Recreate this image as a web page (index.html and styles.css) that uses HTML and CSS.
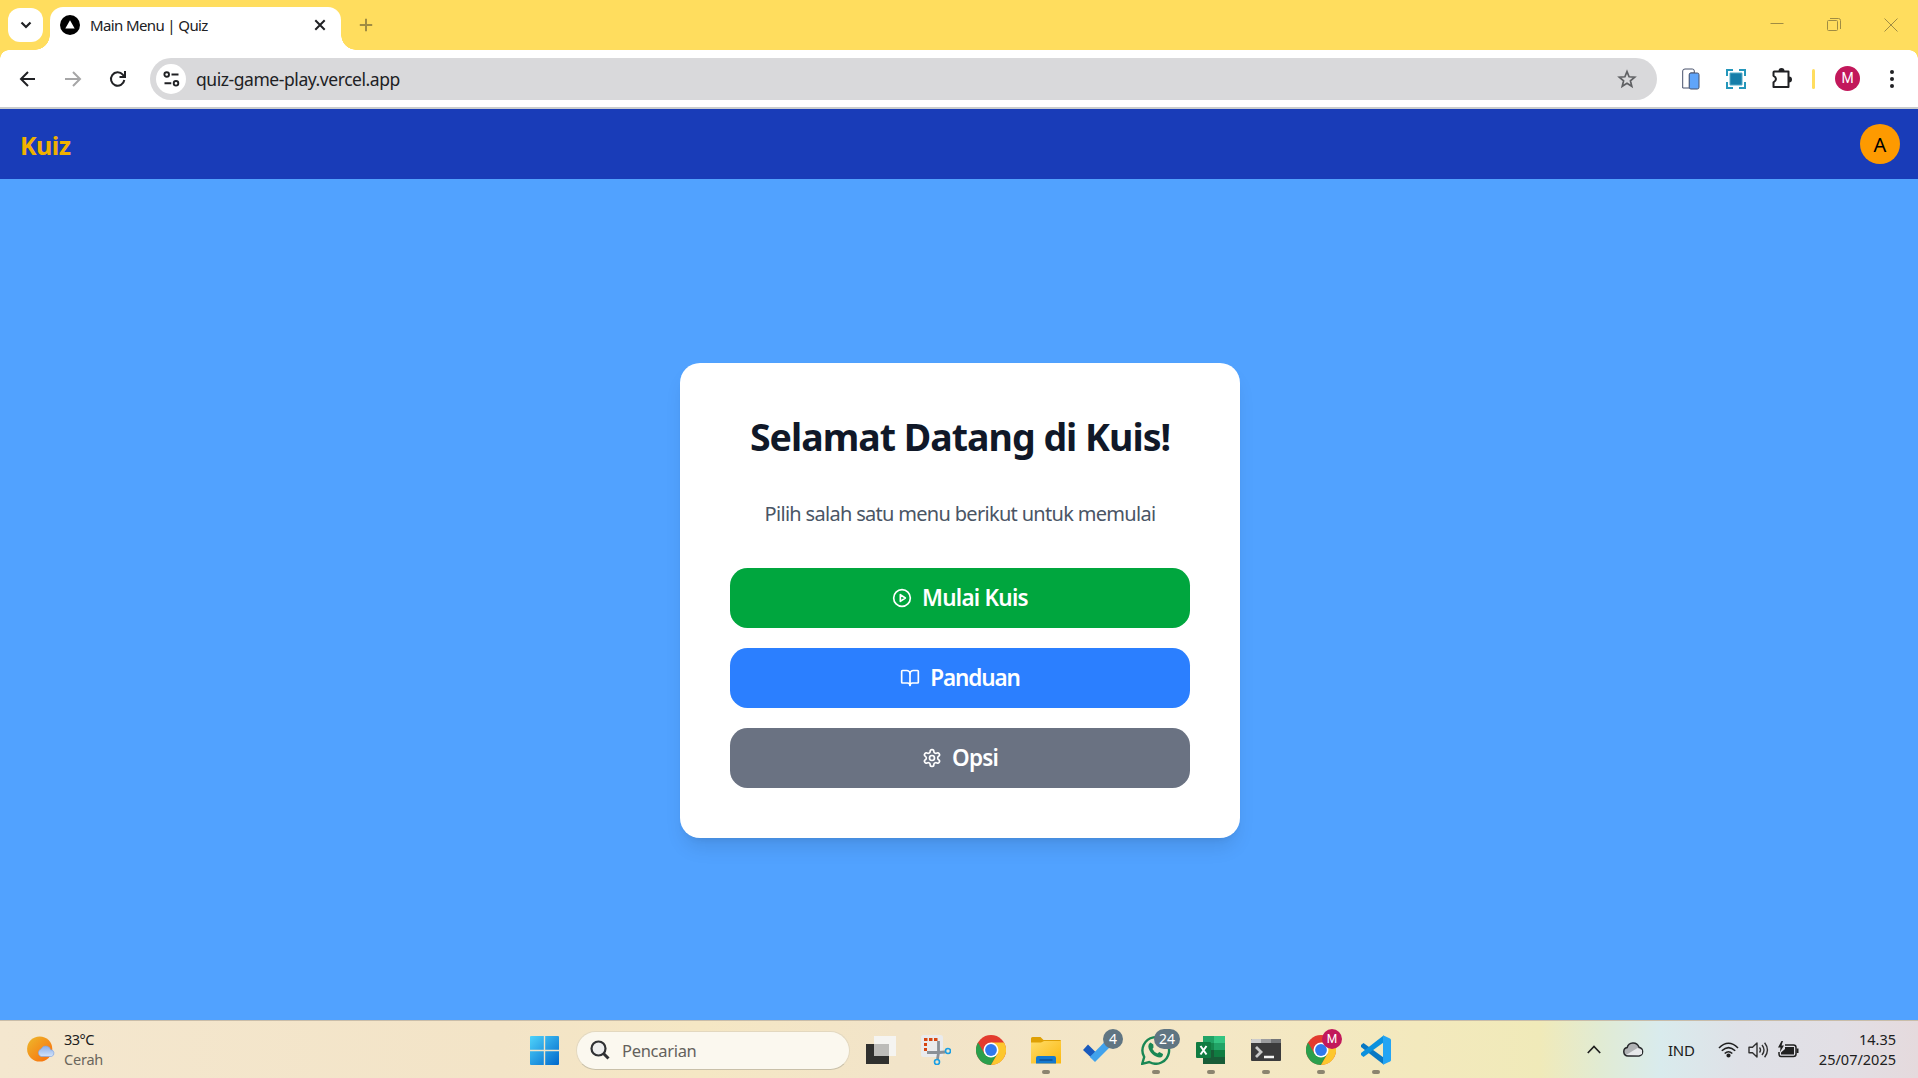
FILE: index.html
```html
<!DOCTYPE html>
<html lang="id">
<head>
<meta charset="utf-8">
<title>Main Menu | Quiz</title>
<link rel="stylesheet" href="styles.css">
</head>
<body>
<div class="screen">
  <div class="tabstrip">
    <div class="tab-search"><svg width="12" height="8" viewBox="0 0 12 8"><path d="M1.500 1.500 6 6l4.500-4.500" fill="none" stroke="#202124" stroke-width="2.200"/></svg></div>
    <div class="tab">
      <svg class="favicon" width="20" height="20" viewBox="0 0 20 20"><circle cx="10" cy="10" r="10"/><path d="M10 5.200 14.700 13.600H5.300z" fill="#fff"/></svg>
      <span class="tab-title">Main Menu | Quiz</span>
      <svg width="12" height="12" viewBox="0 0 12 12"><path d="M1.300 1.300 10.700 10.700M10.700 1.300 1.300 10.700" stroke="#202124" stroke-width="2"/></svg>
    </div>
    <svg class="new-tab" width="14" height="14" viewBox="0 0 14 14"><path d="M7 .8V13.200M.8 7H13.200" stroke="#a08c43" stroke-width="2"/></svg>
    <div class="window-controls">
      <svg width="14" height="14" viewBox="0 0 14 14"><path d="M.5 5.500H13.500" stroke="#a08c43"/></svg>
      <svg width="14" height="14" viewBox="0 0 14 14" fill="none" stroke="#a08c43"><rect x=".5" y="2.500" width="10" height="10" rx="1"/><path d="M3 .5h8.500a2 2 0 0 1 2 2V11"/></svg>
      <svg width="14" height="14" viewBox="0 0 14 14"><path d="M.5.5 13.500 13.500M13.500.5.5 13.500" stroke="#a08c43"/></svg>
    </div>
  </div>

  <div class="toolbar">
    <div class="nav">
      <svg width="18" height="18" viewBox="0 0 18 18" fill="none" stroke="#202124" stroke-width="2"><path d="M16 9H2M9 2 2 9l7 7"/></svg>
      <svg width="18" height="18" viewBox="0 0 18 18" fill="none" stroke="#a6a6a7" stroke-width="2"><path d="M1 9H15.500M9 2l7 7-7 7"/></svg>
      <svg width="18" height="18" viewBox="0 0 18 18" fill="none" stroke="#202124" stroke-width="2"><path d="M15.300 10A6.700 6.700 0 1 1 13.800 4.700L16 6.700M16 1V7H10.500"/></svg>
    </div>
    <div class="omnibox">
      <span class="site-info"><svg width="17" height="16" viewBox="0 0 17 16" fill="none" stroke="#202124" stroke-width="1.900"><circle cx="3.700" cy="3.500" r="2.300"/><path d="M8.500 3.500H15.500M1.500 12.300H8.300"/><circle cx="13" cy="12.300" r="2.300"/></svg></span>
      <span class="url">quiz-game-play.vercel.app</span>
      <svg width="20" height="20" viewBox="0 0 20 20" fill="none" stroke="#606164" stroke-width="1.700"><path d="M10 2.600 12.100 7.800 17.700 8.200 13.400 11.800 14.800 17.300 10 14.300 5.200 17.300 6.600 11.800 2.300 8.200 7.900 7.800z"/></svg>
    </div>
    <div class="extensions">
      <svg width="18" height="22" viewBox="0 0 18 22" stroke="#47516b"><path d="M.7 20V3Q.7 1 3 1H10.300Q12.300 1 12.300 3V5H9Q7.500 5 7.500 7V20z" fill="#fff"/><rect x="7.200" y="5" width="9.800" height="16" rx="1.700" fill="#60a5fa"/></svg>
      <svg width="20" height="20" viewBox="0 0 20 20" fill="none" stroke="#2597bb" stroke-width="2"><path d="M1 7V1H7M13 1H19V7M19 13V19H13M7 19H1V13"/><path d="M4 4H16V16H4z" fill="#167ea9" stroke="#50aac6" stroke-width="1"/></svg>
      <svg width="21" height="21" viewBox="0 0 21 21"><path d="M3.300 3.500H17.500V19H2.500V14.300C5.800 12.500 5.800 9.300 2.500 7.800V4.500Q2.500 3.500 3.300 3.500z" fill="none" stroke="#202124" stroke-width="2" stroke-linejoin="round"/><path d="M7.500 3a3 3 0 0 1 6 0zM18 8.500a3 3 0 0 1 0 6z" fill="#202124"/></svg>
      <i class="divider"></i>
      <span class="profile">M</span>
      <svg width="4" height="18" viewBox="0 0 4 18" fill="#202124"><circle cx="2" cy="2" r="2"/><circle cx="2" cy="9" r="2"/><circle cx="2" cy="16" r="2"/></svg>
    </div>
  </div>

  <header class="app-header">
    <span class="brand">Kuiz</span>
    <span class="avatar">A</span>
  </header>

  <main class="stage">
    <section class="card">
      <h1>Selamat Datang di Kuis!</h1>
      <p>Pilih salah satu menu berikut untuk memulai</p>
      <button class="btn start"><svg class="lucide" viewBox="0 0 24 24"><circle cx="12" cy="12" r="10"/><path d="M10 8 16 12 10 16z"/></svg><span>Mulai Kuis</span></button>
      <button class="btn guide"><svg class="lucide" viewBox="0 0 24 24"><path d="M12 7v14"/><path d="M3 18a1 1 0 0 1-1-1V4a1 1 0 0 1 1-1h5a4 4 0 0 1 4 4 4 4 0 0 1 4-4h5a1 1 0 0 1 1 1v13a1 1 0 0 1-1 1h-6a3 3 0 0 0-3 3 3 3 0 0 0-3-3z"/></svg><span>Panduan</span></button>
      <button class="btn options"><svg class="lucide" viewBox="0 0 24 24"><path d="M12.220 2h-.44a2 2 0 0 0-2 2v.18a2 2 0 0 1-1 1.730l-.43.25a2 2 0 0 1-2 0l-.15-.08a2 2 0 0 0-2.730.73l-.22.38a2 2 0 0 0 .73 2.730l.15.1a2 2 0 0 1 1 1.720v.51a2 2 0 0 1-1 1.740l-.15.09a2 2 0 0 0-.73 2.730l.22.38a2 2 0 0 0 2.730.73l.15-.08a2 2 0 0 1 2 0l.43.25a2 2 0 0 1 1 1.730V20a2 2 0 0 0 2 2h.44a2 2 0 0 0 2-2v-.18a2 2 0 0 1 1-1.730l.43-.25a2 2 0 0 1 2 0l.15.08a2 2 0 0 0 2.730-.73l.22-.39a2 2 0 0 0-.73-2.730l-.15-.08a2 2 0 0 1-1-1.740v-.5a2 2 0 0 1 1-1.740l.15-.09a2 2 0 0 0 .73-2.730l-.22-.38a2 2 0 0 0-2.730-.73l-.15.08a2 2 0 0 1-2 0l-.43-.25a2 2 0 0 1-1-1.730V4a2 2 0 0 0-2-2z"/><circle cx="12" cy="12" r="3"/></svg><span>Opsi</span></button>
    </section>
  </main>

  <footer class="taskbar">
    <svg width="0" height="0" class="defs"><defs>
      <linearGradient id="sun" x1="0" y1="0" x2="1" y2="1"><stop stop-color="#edb92c"/><stop offset="1" stop-color="#fa6a0a"/></linearGradient>
      <linearGradient id="cloud" x1="0" y1="0" x2="0" y2="1"><stop stop-color="#8aaeea"/><stop offset="1" stop-color="#d2e2f8"/></linearGradient>
      <linearGradient id="win" gradientUnits="userSpaceOnUse" x1="0" y1="0" x2="29" y2="29"><stop stop-color="#4fd3fa"/><stop offset="1" stop-color="#0068cc"/></linearGradient>
      <linearGradient id="folder" x1="0" y1="0" x2="1" y2="1"><stop stop-color="#ffdc68"/><stop offset="1" stop-color="#fbb80e"/></linearGradient>
      <symbol id="chrome" viewBox="0 0 30 30"><circle cx="15" cy="15" r="15" fill="#e33b2e"/><path d="M2 7.500A15 15 0 0 0 15 30L21.500 18.700 8.500 18.700z" fill="#2b9f4c"/><path d="M15 7.500H28A15 15 0 0 1 15 30L21.500 18.700z" fill="#fdc72e"/><circle cx="15" cy="15" r="7.500" fill="#fff"/><circle cx="15" cy="15" r="5.900" fill="#3079ed"/></symbol>
    </defs></svg>
    <div class="weather">
      <svg width="29" height="27" viewBox="0 0 29 27"><circle cx="12.700" cy="13" r="12.600" fill="url(#sun)"/><path d="M14 20.500a4 4 0 0 1 0-7.500q2-4 6-2.800 3 .8 3.600 3.500a3.500 3.500 0 0 1 1 6.800z" fill="url(#cloud)" stroke="#85a6df" stroke-width=".7"/></svg>
      <div class="stack"><span>33°C</span><span class="muted">Cerah</span></div>
    </div>
    <svg class="start-logo" width="29" height="29" viewBox="0 0 29 29" fill="url(#win)"><path d="M1 0H13.800V13.800H0V1Q0 0 1 0zM15.200 0H28Q29 0 29 1V13.800H15.200zM0 15.200H13.800V29H1Q0 29 0 28zM15.200 15.200H29V28Q29 29 28 29H15.200z"/></svg>
    <div class="search">
      <svg width="20" height="20" viewBox="0 0 20 20" fill="none" stroke="#303133" stroke-width="2.200"><circle cx="8.500" cy="8.500" r="7" fill="#eeeeed"/><path d="M13.500 13.500 18.500 18.500" stroke-width="3"/></svg>
      <span>Pencarian</span>
    </div>
    <div class="apps">
      <div class="app"><svg width="30" height="30" viewBox="0 0 30 30"><path d="M0 9H23V29H0z" fill="#30302e"/><path d="M8 1H30V21H8z" fill="#f5f4f1"/><path d="M8 9H23V21H8z" fill="#bdbcb9"/></svg></div>
      <div class="app"><svg width="30" height="30" viewBox="0 0 30 30" fill="none"><rect width="22" height="22" rx="2.500" fill="#eaebed"/><path d="M3 4.500H17" stroke="#d74612" stroke-width="3" stroke-dasharray="3.500 1.500"/><path d="M4.500 8V17" stroke="#d74612" stroke-width="3" stroke-dasharray="3 2"/><path d="M17.500 6V18L16.500 24M6 17.500H18L24 17" stroke="#8a9096" stroke-width="2.800"/><circle cx="27" cy="16" r="2.500" stroke="#1a9fe4" stroke-width="1.600"/><circle cx="16" cy="27" r="2.500" stroke="#1a9fe4" stroke-width="1.600"/></svg></div>
      <div class="app"><svg width="30" height="30"><use href="#chrome"/></svg></div>
      <div class="app running"><svg width="30" height="30" viewBox="0 0 30 30"><path d="M0 3.500Q0 2 1.500 2H9.500L12.500 5H29Q30 5 30 6V12H0z" fill="#dfa004"/><path d="M0 7.500H10L13 6H30V28.500H0z" fill="url(#folder)"/><path d="M5 28.500V23Q5 21 7 21H23Q25 21 25 23V28.500z" fill="#1479ce"/><path d="M8.500 25H21.500" stroke="#0b4a8d" stroke-width="1.300"/></svg></div>
      <div class="app todo"><svg width="30" height="30" viewBox="0 0 30 30"><path d="M0 15 5 9.500 12.500 17 7.500 22z" fill="#195abd"/><path d="M6.800 22 23 5.500 28 11 12 27z" fill="#41a2ec"/></svg><b class="badge">4</b></div>
      <div class="app running"><svg width="30" height="30" viewBox="0 0 30 30"><path d="M1.200 28.800 3.200 22A13.300 13.300 0 1 1 8.200 27z" fill="none" stroke="#198754" stroke-width="2.400"/><path d="M9.500 7.500 12.300 9.500 12.500 12.500 11.500 14Q13.200 17.500 16.500 18.500L18.300 16.900 22 19Q22 22 19 22.600C14 22.500 7.300 16.500 7.300 11.200Q7.400 8.500 9.500 7.500z" fill="#198754"/></svg><b class="badge wide">24</b></div>
      <div class="app running"><svg width="30" height="30" viewBox="0 0 30 30"><path d="M7 1H18V15H7z" fill="#21a366"/><path d="M18 1H29V8H18z" fill="#33c481"/><path d="M18 8H29V15H18z" fill="#21a366"/><path d="M7 8H18V15H7z" fill="#16884d"/><path d="M18 15H29V22H18z" fill="#107c41"/><path d="M7 15H18V22H29V29H7z" fill="#185c37"/><rect y="7" width="15" height="16" rx="1" fill="#107c41"/><path d="M4.500 11 10.500 19.500M10.500 11 4.500 19.500" stroke="#fff" stroke-width="2"/></svg></div>
      <div class="app running"><svg width="30" height="24" viewBox="0 0 30 24"><rect y="1" width="30" height="22" rx="1" fill="#3b3b3c"/><path d="M0 5V2Q0 1 1 1H10V5z" fill="#ccc"/><path d="M10 1H20V5H10z" fill="#9c9d9f"/><path d="M20 1H29L30 2V5H20z" fill="#727477"/><path d="M5 9 10 14 5 19" fill="none" stroke="#c9c9c9" stroke-width="2.800"/><path d="M13 19H23" stroke="#f4f4f4" stroke-width="2.500"/></svg></div>
      <div class="app running"><svg width="30" height="30"><use href="#chrome"/></svg><b class="badge user">M</b></div>
      <div class="app running"><svg width="30" height="30" viewBox="0 0 30 30"><path d="M0 10 2.500 8 22.500 22.500V29.500L0 12z" fill="#0878c4"/><path d="M0 20 2.500 22 22.500 7.500V.5L0 18z" fill="#0b91de"/><path d="M22 .3 29 3.500Q30 4 30 5V25Q30 26 29 26.500L22 29.700z" fill="#24a5f4"/></svg></div>
    </div>
    <div class="tray">
      <svg width="14" height="9" viewBox="0 0 14 9"><path d="M.8 8 7 1.500 13.200 8" fill="none" stroke="#202020" stroke-width="1.700"/></svg>
      <svg width="21" height="15" viewBox="0 0 21 15"><path d="M5 14A4.300 4.300 0 0 1 4.200 5.500C5.500 0 13.800-.8 16 5.200A4.500 4.500 0 0 1 16 14z" fill="#b0b2b4" stroke="#27292b" stroke-width="1.500"/><path d="M3 13 14.500 6 19 8V12L16 13.200z" fill="#e7e8ea"/></svg>
      <span class="lang">IND</span>
      <svg width="21" height="16" viewBox="0 0 21 16" fill="none" stroke="#202020" stroke-width="1.600"><path d="M1 6Q10.500-3.500 20 6M3.800 8.800Q10.500 2.300 17.200 8.800M6.700 11.500Q10.500 8 14.300 11.500"/><circle cx="10.500" cy="13.500" r="1.300" fill="#202020"/></svg>
      <svg width="21" height="18" viewBox="0 0 21 18" fill="none" stroke="#303030" stroke-width="1.400"><path d="M1 6.300H4.500L9 2V16L4.500 11.700H1z" stroke-linejoin="round"/><path d="M11.500 6.500Q13.500 9 11.500 11.500M14 4Q18 9 14 14M16.600 1.800Q22.300 9 16.600 16.200"/></svg>
      <svg width="21" height="17" viewBox="0 0 21 17"><path d="M7 4H15.500Q18 4 18 6.500V13Q18 15.500 15.500 15.500H3Q1 15.500 1 13V11" fill="none" stroke="#202020" stroke-width="1.500"/><path d="M7 6H16V13.500H3V11.500L7 8zM18.500 7.500H20.500V12H18.500zM3.500 0 0 6.500H2.500L2 11 6 4.500H3.500L5 0z" fill="#202020"/></svg>
      <div class="stack clock"><span>14.35</span><span class="date">25/07/2025</span></div>
    </div>
  </footer>
</div>
</body>
</html>
```
FILE: styles.css
```css
* { box-sizing: border-box; }
body { margin: 0; font-family: "Noto Sans", "Open Sans", sans-serif; color: #202124; }
svg { display: block; flex: none; }
span { white-space: nowrap; }
.screen { width: 1918px; height: 1078px; display: flex; flex-direction: column; overflow: hidden; }

/* browser frame */
.tabstrip { height: 50px; flex: none; background: #ffdd5e; display: flex; align-items: flex-start; padding-left: 8px; }
.tab-search { width: 35px; height: 34px; margin-top: 8px; border-radius: 12px; background: #fff; display: grid; place-items: center; }
.tab { position: relative; width: 291px; height: 43px; margin: 7px 0 0 7px; padding: 0 15px 7px 10px; border-radius: 13px 13px 0 0; background: #fff; display: flex; align-items: center; }
.tab::before, .tab::after { content: ""; position: absolute; bottom: 0; width: 15px; height: 15px; }
.tab::before { left: -15px; background: radial-gradient(circle at 0 0, transparent 14.5px, #fff 15px); }
.tab::after { right: -15px; background: radial-gradient(circle at 100% 0, transparent 14.5px, #fff 15px); }
.tab-title { margin-left: 10px; flex: 1; font-size: 15px; letter-spacing: -.62px; }
.new-tab { margin: 18px 0 0 18px; }
.window-controls { margin: 18px 20px 0 auto; display: flex; gap: 43px; }
.toolbar { position: relative; height: 59px; flex: none; background: #fff; border-bottom: 2px solid #c9cccd; display: flex; align-items: center; padding: 0 23px 0 19px; }
.toolbar::before { content: ""; position: absolute; left: 0; right: 0; top: 0; height: 9px; background: radial-gradient(circle at 9px 9px, transparent 8.5px, #ffdd5e 9px) 0 0 / 9px 9px no-repeat, radial-gradient(circle at 0 9px, transparent 8.5px, #ffdd5e 9px) 100% 0 / 9px 9px no-repeat; }
.nav { display: flex; gap: 27px; }
.omnibox { width: 1507px; height: 42px; margin-left: 23px; padding: 0 20px 0 6px; border-radius: 21px; background: #d9d9db; display: flex; align-items: center; flex: none; }
.site-info { width: 30px; height: 30px; border-radius: 50%; background: #fff; display: grid; place-items: center; }
.url { flex: 1; margin-left: 10px; font-size: 17.5px; letter-spacing: -.44px; }
.extensions { flex: 1; margin-left: 25px; display: flex; align-items: center; }
.extensions svg:nth-of-type(2) { margin-left: 26px; }
.extensions svg:nth-of-type(3) { margin-left: 25px; }
.divider { width: 3px; height: 20px; margin-left: 20px; border-radius: 2px; background: #ffdd5e; }
.profile { width: 25px; height: 25px; margin: 0 30px 0 20px; border-radius: 50%; background: #c2185b; color: #fff; font: 14px/25px Roboto, sans-serif; text-align: center; }

/* quiz application */
.app-header { height: 70px; flex: none; background: #193cb8; display: flex; align-items: center; justify-content: space-between; padding: 0 18px 0 20px; }
.brand { color: #f0b100; font-size: 25px; font-weight: 700; letter-spacing: -.5px; padding-top: 2px; }
.avatar { width: 40px; height: 40px; border-radius: 50%; background: #fe9a00; color: #000; font-size: 20px; line-height: 42px; text-align: center; }
.stage { flex: 1; background: #51a2ff; display: flex; justify-content: center; align-items: flex-start; padding: 184px 0 0 2px; }
.card { width: 560px; height: 475px; padding: 50px; border-radius: 20px; background: #fff; box-shadow: 0 12.5px 19px -4px rgb(0 0 0 / .1), 0 5px 7.5px -5px rgb(0 0 0 / .1); display: flex; flex-direction: column; text-align: center; }
h1 { margin: -1px 0 0; color: #101828; font-size: 37.5px; line-height: 50px; letter-spacing: -.98px; white-space: nowrap; }
.card p { margin: 37px 0 40px; color: #4a5565; font-size: 20px; line-height: 29px; letter-spacing: -.69px; white-space: nowrap; }
.btn { height: 60px; margin: 0 0 20px; flex: none; border: 0; border-radius: 17.5px; color: #fff; font: 600 22.500px/35px "Noto Sans", sans-serif; letter-spacing: -.85px; display: flex; align-items: center; justify-content: center; gap: 10px; }
.btn span { margin-top: -2px; }
.start { background: #00a63e; letter-spacing: -.75px; }
.guide { background: #2b7fff; letter-spacing: -1.15px; }
.options { background: #6a7282; }
.lucide { width: 20px; height: 20px; fill: none; stroke: #fff; stroke-width: 2; stroke-linecap: round; stroke-linejoin: round; }

/* desktop taskbar */
.taskbar { height: 58px; flex: none; border-top: 1px solid #c9bda9; background: linear-gradient(90deg, #f4e7cf 0, #f3e4c7 500px, #f5e7c4 700px, #f2e4c9 900px, #f4e7c6 1200px, #f3e9bd 1420px, #f0eab9 1540px, #e1ebd3 1600px, #d9ebed 1660px, #dfe1e7 1740px, #e2dfe5 1840px, #e5dadd 1918px); display: flex; align-items: center; padding: 0 22px 0 27px; color: #202020; }
.defs { position: absolute; }
.weather { width: 503px; display: flex; align-items: center; gap: 8px; }
.stack { display: flex; flex-direction: column; font-size: 14.500px; line-height: 20px; letter-spacing: -.5px; margin-top: -2px; }
.muted { color: #6b665c; letter-spacing: -.2px; }
.start-logo { margin-top: 2px; }
.search { width: 274px; height: 39px; margin: 1px 3px 0 17px; padding-left: 13px; border: 1px solid #e3d8bf; border-bottom-color: #c9c0a9; border-radius: 20px; background: #fbf8ef; color: #64615c; display: flex; align-items: center; gap: 12px; font-size: 16.500px; letter-spacing: -.3px; }
.apps { display: flex; }
.app { position: relative; width: 55px; height: 57px; display: grid; place-items: center; padding-top: 1px; }
.todo svg { margin-right: 5px; }
.running::after { content: ""; position: absolute; left: 23.500px; bottom: 4px; width: 8px; height: 4px; border-radius: 2px; background: #8b846f; }
.badge { position: absolute; top: 8px; left: 30px; width: 20px; height: 20px; border-radius: 10px; background: #607582; color: #fff; font-size: 14px; font-weight: 400; line-height: 20px; text-align: center; }
.badge.wide { left: 26px; width: 26px; }
.badge.user { left: 29px; background: #c2185b; font: 12px/20px Roboto, sans-serif; }
.tray { margin-left: auto; display: flex; align-items: center; }
.tray > svg:nth-child(2) { margin: 0 24px 0 22px; }
.lang { width: 26px; font-size: 15px; letter-spacing: -.3px; margin-right: 24px; }
.tray > svg:nth-child(4), .tray > svg:nth-child(5) { margin-right: 9px; }
.clock { margin-left: 19px; width: 78px; align-items: flex-end; letter-spacing: 0; }
```
